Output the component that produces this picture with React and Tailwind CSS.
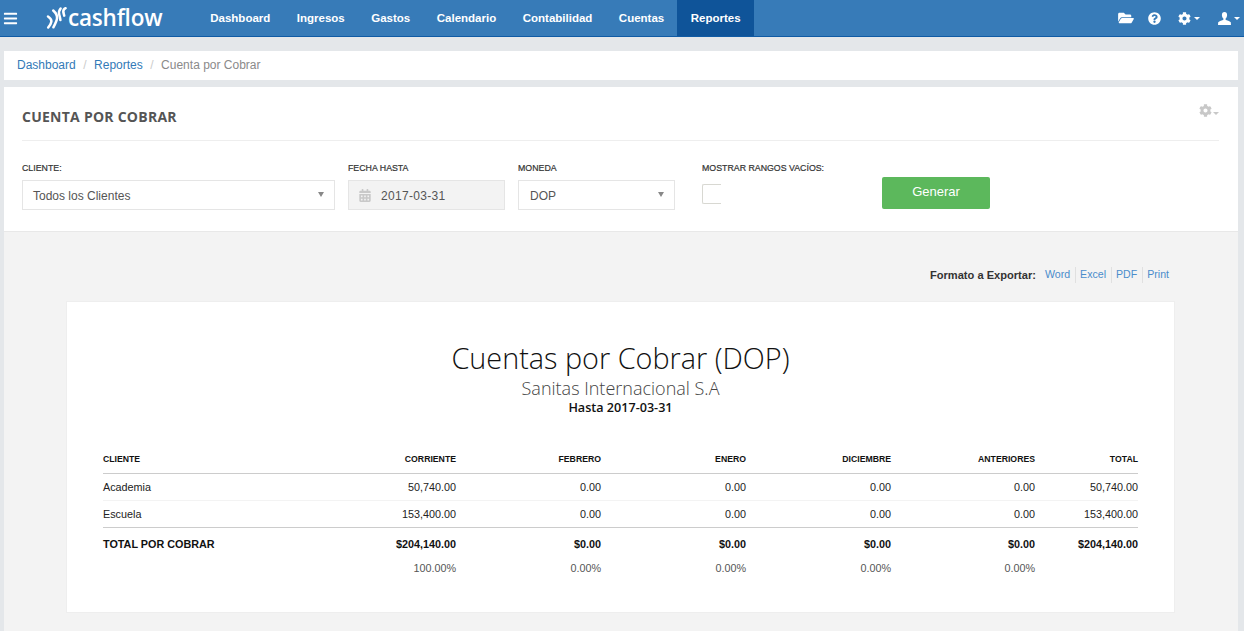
import React from "react";
import { FaBars, FaFolderOpen, FaQuestionCircle, FaCog, FaCalendarAlt } from "react-icons/fa";

const NAV = ["Dashboard", "Ingresos", "Gastos", "Calendario", "Contabilidad", "Cuentas", "Reportes"];

const COLS = ["CORRIENTE", "FEBRERO", "ENERO", "DICIEMBRE", "ANTERIORES", "TOTAL"];

const ROWS = [
  { name: "Academia", values: ["50,740.00", "0.00", "0.00", "0.00", "0.00", "50,740.00"] },
  { name: "Escuela", values: ["153,400.00", "0.00", "0.00", "0.00", "0.00", "153,400.00"] },
];

const TOTALS = ["$204,140.00", "$0.00", "$0.00", "$0.00", "$0.00", "$204,140.00"];
const PERCENTS = ["100.00%", "0.00%", "0.00%", "0.00%", "0.00%", ""];

const GRID = "grid grid-cols-[208px_145px_145px_145px_145px_144px_103px]";

const Caret = ({ className }) => (
  <span className={`inline-block h-0 w-0 border-x-[3px] border-t-[3px] border-x-transparent ${className}`} />
);

const Logo = () => (
  <div className="flex items-center">
    <svg width="21" height="24" viewBox="0 0 21 24" fill="none" stroke="white" strokeWidth="2.5" strokeLinecap="round">
      <path d="M2 10.5c2.6 1.6 3.6 3.2 3.4 5.2-.2 1.8-1.4 3.600-3.200 5.800" />
      <path d="M7.2 4.5c3 2.600 4.200 5 3.800 8-.3 2.600-1.800 5.400-3.600 8.800" />
      <path d="M14.6 2.500c-1.600 2-2 3.800-1.400 6 .4 1.600 1 3.400 1.200 5.600" />
      <path d="M19.600 2.200c-1.800.8-2.600 2.200-2.200 4.400l.8 3" />
    </svg>
    <span className="ml-[1px] text-[22.5px] leading-none font-semibold tracking-[-0.2px] text-white font-['Open_Sans',sans-serif]">
      cashflow
    </span>
  </div>
);

const UserIcon = () => (
  <svg width="13" height="13" viewBox="0 0 13 13" fill="white">
    <path d="M6.5 0C4.8 0 3.900 1.200 3.900 3c0 1.400.6 2.900 1.500 3.600v1.100c-.9.7-4.300 1.200-5.200 2.600L0 13h13l-.2-2.700c-.9-1.400-4.300-1.900-5.200-2.600V6.600c.9-.7 1.500-2.200 1.500-3.600C9.100 1.200 8.200 0 6.500 0z" />
  </svg>
);

const Navbar = () => (
  <header className="flex h-[37px] items-stretch border-b border-[#0f5ba5] bg-[#377bb8] text-white">
    <div className="flex w-[46px] items-center pl-[3px]">
      <FaBars className="h-[15px] w-[15px]" />
    </div>
    <div className="flex w-[151px] items-center">
      <Logo />
    </div>
    <nav className="flex items-stretch">
      {NAV.map((item) => (
        <a
          key={item}
          className={`flex items-center px-[13.25px] pt-[1px] text-[11.5px] font-bold ${item === "Reportes" ? "bg-[#0f5499]" : ""}`}
        >
          {item}
        </a>
      ))}
    </nav>
    <div className="ml-auto flex items-center">
      <FaFolderOpen className="h-[14px] w-[16px]" />
      <FaQuestionCircle className="ml-[14px] h-[13px] w-[13px]" />
      <FaCog className="ml-[17px] h-[13px] w-[13px]" />
      <Caret className="ml-[3px] border-t-white" />
      <span className="ml-[18px]">
        <UserIcon />
      </span>
      <Caret className="mr-[4px] ml-[3px] border-t-white" />
    </div>
  </header>
);

const Breadcrumb = () => (
  <div className="mt-[14px] mr-[6px] ml-1 flex h-[29px] items-center bg-white pb-[2px] pl-[13px] text-[12px]">
    <a className="text-[#337ab7]">Dashboard</a>
    <span className="mx-[7.5px] text-[#cccccc]">/</span>
    <a className="text-[#337ab7]">Reportes</a>
    <span className="mx-[7.5px] text-[#cccccc]">/</span>
    <span className="text-[#8a8a8a]">Cuenta por Cobrar</span>
  </div>
);

const FieldLabel = ({ children }) => (
  <div className="h-[18px] text-[8.8px] leading-[12px] text-[#333333] [-webkit-text-stroke:0.2px_#333333]">{children}</div>
);

const SelectBox = ({ value, className }) => (
  <div className={`flex h-[30px] items-center justify-between border border-[#e5e5e5] bg-white pt-[1px] text-[12px] text-[#555555] ${className}`}>
    <span>{value}</span>
    <span className="mb-[3px] h-0 w-0 border-x-[3.5px] border-t-[5px] border-x-transparent border-t-[#888888]" />
  </div>
);

const Filters = () => (
  <section className="border-b border-[#e8e8e8] bg-white pr-[19px] pl-[18px]">
    <div className="relative flex h-[54px] items-center border-b border-[#eeeeee] pt-[6px]">
      <h1 className="text-[14px] font-bold tracking-[0.25px] text-[#555555] font-['Open_Sans',sans-serif]">CUENTA POR COBRAR</h1>
      <div className="absolute top-[17px] right-0 flex items-end text-[#c8c8c8]">
        <FaCog className="h-[13px] w-[13px]" />
        <Caret className="mb-[2px] ml-[1px] border-t-[#c8c8c8]" />
      </div>
    </div>
    <div className="flex h-[90px] pt-[21px]">
      <div className="w-[313px]">
        <FieldLabel>CLIENTE:</FieldLabel>
        <SelectBox value="Todos los Clientes" className="pr-[10px] pl-[10px]" />
      </div>
      <div className="ml-[13px] w-[157px]">
        <FieldLabel>FECHA HASTA</FieldLabel>
        <div className="flex h-[30px] items-center border border-[#e5e5e5] bg-[#f3f3f3] pt-[1px] pl-[10px] text-[12px] text-[#555555]">
          <FaCalendarAlt className="h-[13px] w-[12px] text-[#c9c9c9]" />
          <span className="ml-[10px] tracking-[0.3px]">2017-03-31</span>
        </div>
      </div>
      <div className="ml-[13px] w-[157px]">
        <FieldLabel>MONEDA</FieldLabel>
        <SelectBox value="DOP" className="pr-[10px] pl-[11px]" />
      </div>
      <div className="ml-[27px] w-[180px]">
        <FieldLabel>MOSTRAR RANGOS VACÍOS:</FieldLabel>
        <div className="mt-[4px] h-[20px] w-[19px] rounded-l-[2px] border-y border-l border-[#d8d8d2] bg-white" />
      </div>
      <button className="mt-[15px] h-[32px] w-[108px] rounded-[2px] bg-[#5cb85c] pb-[3px] text-[13px] text-white">Generar</button>
    </div>
  </section>
);

const ExportBar = () => (
  <div className="flex h-[69px] items-center justify-end pt-[17px] pr-[69px] text-[11.1px]">
    <span className="mr-[9px] font-bold text-[#333333]">Formato a Exportar:</span>
    {["Word", "Excel", "PDF", "Print"].map((item, i) => (
      <a key={item} className={`text-[10.6px] text-[#4a8ccb] ${i < 3 ? "mr-[4.5px] border-r border-[#e0e0e0] pr-[4.5px]" : ""}`}>
        {item}
      </a>
    ))}
  </div>
);

const Report = () => (
  <article className="mr-[63px] ml-[62px] h-[312px] border border-[#eeeeee] bg-white px-[36px] pt-[36px]">
    <div className="text-center font-['Open_Sans',sans-serif]">
      <h2 className="text-[28.8px] leading-[40px] font-light text-[#111111]">Cuentas por Cobrar (DOP)</h2>
      <h3 className="text-[18px] leading-[20px] font-light text-[#444444]">Sanitas Internacional S.A</h3>
      <p className="text-[12.6px] leading-[20px] font-semibold text-[#111111]">Hasta 2017-03-31</p>
    </div>
    <div className="mt-[29px] text-[10.8px] text-[#222222]">
      <div className={`${GRID} h-[27px] items-center border-b border-[#cccccc] text-[8.7px] font-bold text-[#111111]`}>
        <div>CLIENTE</div>
        {COLS.map((col) => (
          <div key={col} className="text-right">{col}</div>
        ))}
      </div>
      {ROWS.map((row, i) => (
        <div key={row.name} className={`${GRID} h-[27px] items-center border-b ${i === 0 ? "border-[#f3f3f3]" : "border-[#cccccc]"}`}>
          <div>{row.name}</div>
          {row.values.map((value, j) => (
            <div key={j} className="text-right">{value}</div>
          ))}
        </div>
      ))}
      <div className={`${GRID} h-[32px] items-center font-bold text-[#111111]`}>
        <div>TOTAL POR COBRAR</div>
        {TOTALS.map((value, j) => (
          <div key={j} className="text-right">{value}</div>
        ))}
      </div>
      <div className={`${GRID} h-[16px] items-center text-[#555555]`}>
        <div />
        {PERCENTS.map((value, j) => (
          <div key={j} className="text-right">{value}</div>
        ))}
      </div>
    </div>
  </article>
);

export default function App() {
  return (
    <div className="h-[631px] overflow-hidden bg-[#e4e7ea] font-['Liberation_Sans',Arial,sans-serif]">
      <Navbar />
      <Breadcrumb />
      <main className="mt-[7px] mr-[6px] ml-1 h-[560px] bg-[#f3f3f3]">
        <Filters />
        <ExportBar />
        <Report />
      </main>
    </div>
  );
}
